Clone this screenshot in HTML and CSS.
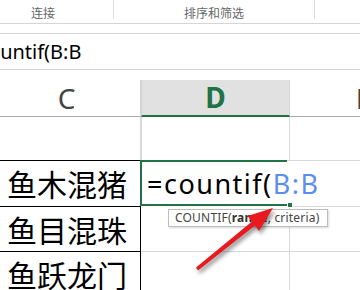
FILE: index.html
```html
<!DOCTYPE html>
<html lang="zh-CN">
<head>
    <meta charset="UTF-8">
    <title>countif</title>
    <link rel="stylesheet" href="styles.css">
</head>
<body>
    <!-- ribbon -->
    <div class="ribbon">
        <div class="group group-link"><span>连接</span></div>
        <div class="group group-sort"><span>排序和筛选</span></div>
        <div class="group"></div>
    </div>

    <!-- formula bar -->
    <div class="formula-bar">
        <span class="formula-text">=countif(B:B</span>
    </div>

    <!-- sheet -->
    <div class="sheet">
        <div class="head">C</div>
        <div class="head head-active">D</div>
        <div class="head">E</div>

        <div class="cell"></div>
        <div class="cell"></div>
        <div class="cell"></div>

        <div class="cell cell-boxed">鱼木混猪</div>
        <div class="cell cell-edit">
            <span class="edit-text">=countif(<span class="ref">B:B</span></span>
            <div class="tooltip">COUNTIF(<b>range</b>, criteria)</div>
        </div>
        <div class="cell cell-covered"></div>

        <div class="cell cell-boxed">鱼目混珠</div>
        <div class="cell"></div>
        <div class="cell"></div>

        <div class="cell cell-boxed">鱼跃龙门</div>
        <div class="cell"></div>
        <div class="cell"></div>
    </div>

    <svg class="arrow" width="360" height="290" viewBox="0 0 360 290">
        <polygon points="273,208 259,231 255,225.5 198,270.5 196,267.5 252,221.5 247.5,216" fill="#e8191f"/>
    </svg>
</body>
</html>
```

FILE: styles.css
```css
body {
    margin: 0;
    width: 360px;
    height: 290px;
    overflow: hidden;
    background: #fff;
    font-family: 'Noto Sans', 'Noto Sans CJK SC', sans-serif;
    position: relative;
}

/* ribbon */
.ribbon {
    display: flex;
    margin-left: -27px;
    height: 23px;
    border-bottom: 1px solid #d5d5d5;
}

.group {
    height: 19px;
    flex: 1;
    text-align: center;
    font-family: 'Noto Sans CJK SC', sans-serif;
    font-size: 12px;
    line-height: 12px;
    color: #666;
}

.group span {
    display: block;
    padding-top: 7px;
}

.group-link {
    flex: 0 0 140px;
    border-right: 1px solid #dcdcdc;
}

.group-sort {
    flex: 0 0 200px;
    border-right: 1px solid #dcdcdc;
}

/* formula bar */
.formula-bar {
    margin-top: 9px;
    height: 35px;
    border-top: 1px solid #d4d4d4;
    border-bottom: 1px solid #d4d4d4;
    overflow: hidden;
    white-space: nowrap;
}

.formula-text {
    display: block;
    margin-left: -33px;
    font-size: 20px;
    line-height: 35px;
    color: #000;
}

/* sheet */
.sheet {
    margin-top: 10px;
    margin-left: -7px;
    display: grid;
    grid-template-columns: 148px 149px 148px;
    grid-template-rows: 37px 44px 46px 45px 45px;
}

.head {
    border-bottom: 1px solid #ababab;
    border-right: 1px solid #d4d4d4;
    text-align: center;
    font-size: 28px;
    line-height: 36px;
    color: #444;
}

.head-active {
    background: #e1e1e1;
    border-bottom: 2px solid #217346;
    border-left: 1px solid #d4d4d4;
    color: #217346;
    font-weight: bold;
    line-height: 35px;
}

.cell {
    border-right: 1px solid #d9d9d9;
    border-bottom: 1px solid #d9d9d9;
    white-space: nowrap;
}

.sheet > .cell:nth-child(3n+2) {
    border-left: 1px solid #d9d9d9;
}

.cell-boxed {
    border-top: 1px solid #000;
    border-right: 1px solid #000;
    border-bottom: 0;
    margin-top: -1px;
    padding-left: 14px;
    font-family: 'Noto Sans CJK SC', sans-serif;
    font-size: 30px;
    line-height: 44px;
    color: #000;
}

.sheet > .cell-boxed + .cell {
    border-left: 0;
}

.cell-edit {
    position: relative;
    z-index: 2;
    border-right-color: #fff;
    border-bottom-color: transparent;
}

.cell-edit::after {
    content: '';
    position: absolute;
    left: -1px;
    top: -1px;
    width: 145px;
    bottom: 0;
    border: 2px solid #217346;
    border-right: 0;
}

.cell-edit::before {
    content: '';
    position: absolute;
    left: 146px;
    bottom: -2px;
    width: 4px;
    height: 4px;
    background: #217346;
    border: 1px solid #fff;
    z-index: 3;
}

.edit-text {
    display: block;
    padding-left: 6px;
    font-size: 27px;
    line-height: 45px;
    letter-spacing: 1.5px;
    color: #000;
}

.ref {
    color: #5b8ef0;
}

.cell-covered {
    border-bottom-color: #d9d9d9;
}

.tooltip {
    position: absolute;
    left: 27px;
    top: 48px;
    padding: 0 7px 0 6px;
    height: 16px;
    border: 1px solid #bdbdbd;
    background: #fff;
    box-shadow: 1px 1px 2px rgba(0, 0, 0, 0.15);
    font-size: 12px;
    line-height: 16px;
    letter-spacing: 0.2px;
    color: #444;
    z-index: 4;
}

.tooltip b {
    color: #333;
}

.arrow {
    position: absolute;
    left: 0;
    top: 0;
    z-index: 5;
    filter: drop-shadow(2px 3px 2px rgba(0, 0, 0, 0.45));
}
```
